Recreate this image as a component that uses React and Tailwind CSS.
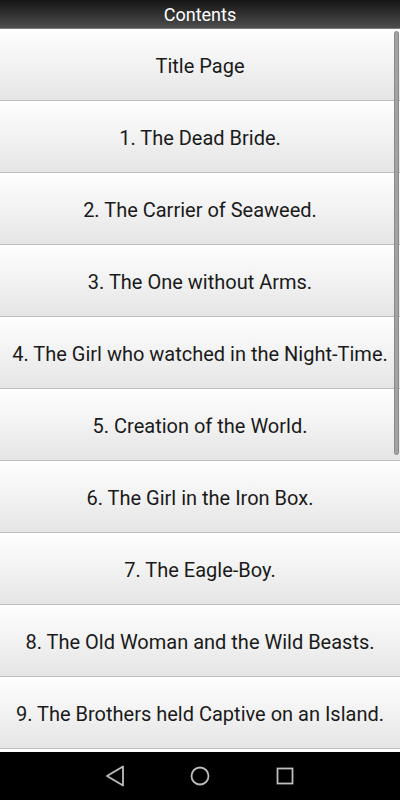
const chapters = [
  'Title Page',
  '1. The Dead Bride.',
  '2. The Carrier of Seaweed.',
  '3. The One without Arms.',
  '4. The Girl who watched in the Night-Time.',
  '5. Creation of the World.',
  '6. The Girl in the Iron Box.',
  '7. The Eagle-Boy.',
  '8. The Old Woman and the Wild Beasts.',
  '9. The Brothers held Captive on an Island.',
];

export default function App() {
  return (
    <div className="w-[400px] h-[800px] flex flex-col bg-white overflow-hidden font-['Roboto',sans-serif]">
      {/* header */}
      <div className="h-[29px] shrink-0 flex items-center justify-center pt-[2px] bg-gradient-to-b from-[#161616] to-[#4e4e4e] border-b border-[#7a7a7a]">
        <span className="text-white text-[18px] leading-none">Contents</span>
      </div>

      {/* list */}
      <div className="relative flex-1 overflow-hidden">
        <ul>
          {chapters.map(c => (
            <li key={c} className="h-[72px] flex items-center justify-center pt-[3px] bg-gradient-to-b from-white to-[#e5e5e5] border-b border-[#bdbdbd] text-[20px] text-[#1a1a1a] whitespace-nowrap">
              {c}
            </li>
          ))}
          <li className="h-[72px] bg-gradient-to-b from-white to-[#e5e5e5]" />
        </ul>
        <div className="absolute right-[1px] top-[2px] w-[5px] h-[424px] rounded-sm bg-[#a3a3a3] border border-[#8a8a8a]" />
      </div>

      {/* nav bar */}
      <div className="h-[48px] shrink-0 bg-black flex items-center justify-center gap-[61px]">
        <svg width="24" height="24" viewBox="0 0 24 24" fill="none" stroke="#bdbdbd" strokeWidth="1.8" strokeLinejoin="round">
          <path d="M4 12 L20 2.5 L20 21.5 Z" />
        </svg>
        <svg width="24" height="24" viewBox="0 0 24 24" fill="none" stroke="#bdbdbd" strokeWidth="1.8">
          <circle cx="12" cy="12" r="8.5" />
        </svg>
        <svg width="24" height="24" viewBox="0 0 24 24" fill="none" stroke="#bdbdbd" strokeWidth="1.8">
          <rect x="4.5" y="4.5" width="15" height="15" />
        </svg>
      </div>
    </div>
  );
}
